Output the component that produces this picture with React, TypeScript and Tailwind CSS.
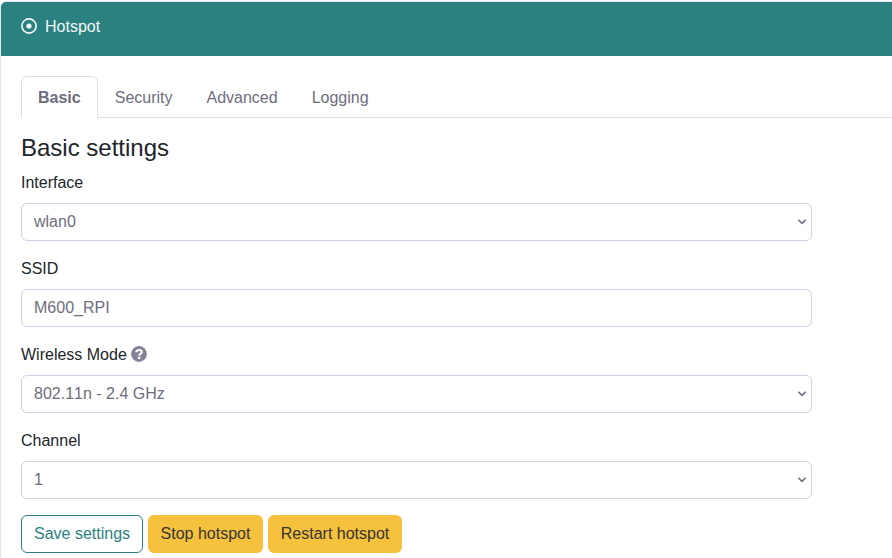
import React from 'react';

const tabs = ['Security', 'Advanced', 'Logging'];

const control =
  'block h-[38px] w-full appearance-none rounded-md border border-[#d1d0e2] bg-white px-3 pb-px text-base leading-6 text-[#6e6d7d] outline-none';

function Help() {
  return (
    <svg className="relative -top-px ml-1 h-4 w-4" viewBox="0 0 16 16" fill="none">
      <circle cx="8" cy="8" r="7.900" fill="#858496" />
      <path d="M5.300 6.300C5.300 4.700 6.500 4 8.100 4S10.700 4.800 10.700 6.200C10.700 7.900 8.200 7.700 8.200 9.500" stroke="white" strokeWidth="2.100" />
      <circle cx="8.150" cy="11.800" r="1.350" fill="white" />
    </svg>
  );
}

function SelectField({ label, value, help }: { label: string; value: string; help?: boolean }) {
  return (
    <div className="mb-4">
      <label className="mb-2 flex h-6 items-center">
        {label}
        {help && <Help />}
      </label>
      <div className="relative">
        <select className={`${control} [font-kerning:none]`} defaultValue={value}>
          <option>{value}</option>
        </select>
        <svg
          className="pointer-events-none absolute top-[15px] right-[5px] h-2 w-[10px]"
          viewBox="0 0 10 8"
          fill="none"
          stroke="#6e6d7d"
          strokeWidth="1.5"
        >
          <path d="M1.300 1.700 5 5.400 8.700 1.700" />
        </svg>
      </div>
    </div>
  );
}

export default function App() {
  return (
    <div className="h-[558px] overflow-hidden bg-white pt-px font-['Liberation_Sans',Arial,sans-serif] text-base text-[#212529]">
      <div className="h-[640px] w-[920px] rounded-md border border-[#e3e3f2]">
        <header className="flex h-[54px] items-center rounded-t-[5px] bg-[#2b8080] pb-[5px] pl-5 text-[#f3f8f8]">
          <svg className="mr-2 mb-px h-4 w-4" viewBox="0 0 16 16" fill="none">
            <circle cx="8" cy="8" r="7.100" stroke="currentColor" strokeWidth="1.700" />
            <circle cx="8" cy="8" r="2.600" fill="currentColor" />
          </svg>
          <span>Hotspot</span>
        </header>
        <main className="p-5">
          <nav className="flex h-[42px] border-b border-[#dddfeb] text-[#6e6d7d]">
            <a className="-mb-px h-[42px] rounded-t-md border border-b-0 border-[#dddfeb] bg-white px-4 py-2 leading-[25px] font-bold">
              Basic
            </a>
            {tabs.map((tab) => (
              <a key={tab} className="border border-transparent px-4 py-2 leading-[25px]">
                {tab}
              </a>
            ))}
          </nav>
          <h4 className="mt-[15px] mb-[9px] text-2xl leading-[29px]">Basic settings</h4>
          <div className="w-[791px]">
            <SelectField label="Interface" value="wlan0" />
            <div className="mb-4">
              <label className="mb-2 block h-6 leading-6">SSID</label>
              <input className={control} defaultValue="M600_RPI" />
            </div>
            <SelectField label="Wireless Mode" value="802.11n - 2.4 GHz" help />
            <SelectField label="Channel" value="1" />
          </div>
          <div className="flex gap-[5px]">
            <button className="h-[38px] w-[122px] rounded-md border border-[#2b8080] pb-px text-[#2b8080]">
              Save settings
            </button>
            <button className="h-[38px] w-[115px] rounded-md bg-[#f6c23e] pb-px text-[#343434]">
              Stop hotspot
            </button>
            <button className="h-[38px] w-[134px] rounded-md bg-[#f6c23e] pb-px text-[#343434]">
              Restart hotspot
            </button>
          </div>
        </main>
      </div>
    </div>
  );
}
